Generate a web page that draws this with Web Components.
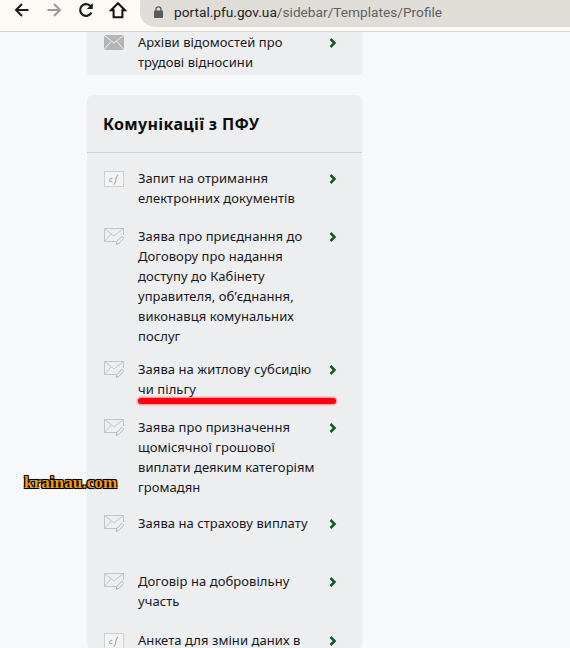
<!DOCTYPE html>
<html lang="uk"><head><meta charset="utf-8"><title>Profile</title>
<style>
html,body{margin:0;height:648px;overflow:hidden;background:#f7f8fa;font-family:"Noto Sans","Open Sans",sans-serif}
</style></head><body>
<browser-bar><span>portal.pfu.gov.ua</span><span slot="path">/sidebar/Templates/Profile</span></browser-bar>
<page-main>
<side-card class="top">
 <nav-item icon="mail-full" gap="0">Архіви відомостей про<br>трудові відносини</nav-item>
</side-card>
<side-card title="Комунікації з ПФУ">
 <nav-item icon="doc" gap="0">Запит на отримання<br>електронних документів</nav-item>
 <nav-item icon="mail" gap="18">Заява про приєднання до<br>Договору про надання<br>доступу до Кабінету<br>управителя, об’єднання,<br>виконавця комунальних<br>послуг</nav-item>
 <nav-item icon="mail" gap="13" mark>Заява на житлову субсидію<br>чи пільгу</nav-item>
 <nav-item icon="mail" gap="18">Заява про призначення<br>щомісячної грошової<br>виплати деяким категоріям<br>громадян</nav-item>
 <nav-item icon="mail" gap="16" tall>Заява на страхову виплату</nav-item>
 <nav-item icon="mail" gap="18">Договір на добровільну<br>участь</nav-item>
 <nav-item icon="doc" gap="19">Анкета для зміни даних в</nav-item>
</side-card>
</page-main>
<water-mark>krainau.com</water-mark>
<script>
function def(name,html){customElements.define(name,class extends HTMLElement{
 constructor(){super();const r=this.attachShadow({mode:'open'});r.innerHTML=typeof html==='function'?html(this):html;}
});}
def('browser-bar',`<style>
:host{display:flex;box-sizing:border-box;height:32px;background:#fdf9f5;border-bottom:1px solid #d8d4d0;padding-left:12px;align-items:flex-start}
svg{display:block;flex:none}
.icons{display:flex;align-items:center;gap:12px;height:20px}
.url{margin-left:12px;flex:1;height:27px;background:#e0dcd8;border-radius:0 0 0 15px;display:flex;align-items:center;padding:0 0 3px 14px;box-sizing:border-box;gap:11px;font:13.7px "Roboto","Noto Sans",sans-serif;color:#222}
.p{color:#5f5f5f}
</style>
<div class="icons">
<svg width="20" height="20" viewBox="0 0 20 20" fill="none" stroke="#1c1c1c" stroke-width="2"><path d="M16.500 10H4.500M10 4 4 10l6 6"/></svg>
<svg width="20" height="20" viewBox="0 0 20 20" fill="none" stroke="#9c9a98" stroke-width="2"><path d="M3.500 10h12M10 4l6 6-6 6"/></svg>
<svg width="20" height="20" viewBox="0 0 20 20" fill="none" stroke="#1c1c1c" stroke-width="2.200"><path d="M15.400 12.500A5.900 5.900 0 1 1 14.200 5.800L15.500 7"/><path d="M16.800 3v6h-6z" fill="#1c1c1c" stroke="none"/></svg>
<svg width="20" height="20" viewBox="0 0 20 20" fill="none" stroke="#111" stroke-width="2"><path d="M10 3.200 3 10.200h2.600v7h8.800v-7H17z"/></svg>
</div>
<div class="url"><svg width="9" height="12" viewBox="0 0 9 12"><path d="M2 5V3.300a2.500 2.500 0 0 1 5 0V5" fill="none" stroke="#5a5a5a" stroke-width="1.300"/><rect y="4.500" width="9" height="7.500" rx="1" fill="#5a5a5a"/></svg>
<div><slot></slot><span class="p"><slot name="path"></slot></span></div></div>`);
def('page-main',`<style>:host{display:block;padding-left:87px;width:275px}</style><slot></slot>`);
def('side-card',el=>{const t=el.getAttribute('title');const top=el.classList.contains('top');return `<style>
:host{display:block;background:#edeef0;border-radius:${top?'0 0 3px 3px':'6px'};box-sizing:border-box;${top?'height:43px;margin-bottom:20px;':''}}
h2{margin:0;height:58px;box-sizing:border-box;padding:18px 0 0 16px;font:700 16px/22px "Noto Sans",sans-serif;letter-spacing:.32px;color:#0c0c0c;border-bottom:1px solid #cfd0d2}
.b{padding-top:${top?0:15}px}
</style>${t?`<h2>${t}</h2>`:''}<div class="b"><slot></slot></div>`});
const ICONS={
 'mail-full':`<svg width="20" height="15" viewBox="0 0 20 15"><rect width="20" height="15" fill="#b4b4b4"/><path d="M0 0l10 8 10-8M0 15l7-8.500M20 15l-7-8.500" fill="none" stroke="#edeef0" stroke-width="1"/></svg>`,
 'mail':`<svg width="20" height="17" viewBox="0 0 20 17" fill="none" stroke="#c4c4c4"><path d="M12.500 13.500H.5V.5h19v6.500M.5.5l9.500 7.500 9.500-7.500M.5 13.500 7 6"/><path d="M12 16.500l1-3.200 5-5 2 2-5 5z" stroke="#b6b6b6"/></svg>`,
 'doc':`<svg width="20" height="16" viewBox="0 0 20 16" fill="none" stroke="#cfcfcf"><rect x=".5" y=".5" width="19" height="15" fill="#f3f3f4"/><path d="M8.500 7.500c-2-.8-3.300 1-2.800 2.500.4 1 1.700.9 2.500.1M9.500 13c2.300 0 1.900-4 2.800-6.200.4-1 .9-2 1.700-2.800" stroke="#adadad" stroke-width="1.200"/></svg>`};
def('nav-item',el=>{const ic=el.getAttribute('icon');return `<style>
:host{display:flex;margin-top:${el.getAttribute('gap')}px;${el.hasAttribute('tall')?'min-height:40px;':''}position:relative;padding-left:17px;font:13px/20px "Noto Sans",sans-serif;letter-spacing:.06px;color:#18181c}
.i{width:34px;flex:none;padding-top:${ic==='mail'?2:3}px}.i svg{display:block}
.t{width:190px;flex:none}
.c{margin-left:1px;padding-top:6px}
.c svg{display:block}
.m{position:absolute;left:51px;top:39px;width:198px;height:6px;border-radius:3px;background:#fb0010;box-shadow:0 0 2px 1px #fb001077}
</style><div class="i">${ICONS[ic]}</div><div class="t"><slot></slot></div>
<div class="c"><svg width="8" height="10" viewBox="0 0 8 10" fill="none" stroke="#115a28" stroke-width="2.500"><path d="M1.500 1 5.500 5 1.500 9"/></svg></div>${el.hasAttribute('mark')?'<div class="m"></div>':''}`});
def('water-mark',`<style>
:host{position:absolute;left:24px;top:473px;font:700 17px/20px "Liberation Serif",serif;color:#f39a0c;letter-spacing:.1px;text-shadow:-1px -1px 0 #000,1px -1px 0 #000,-1px 1px 0 #000,1px 1px 0 #000,0 0 2px #000}
</style><slot></slot>`);
</script>
</body></html>
